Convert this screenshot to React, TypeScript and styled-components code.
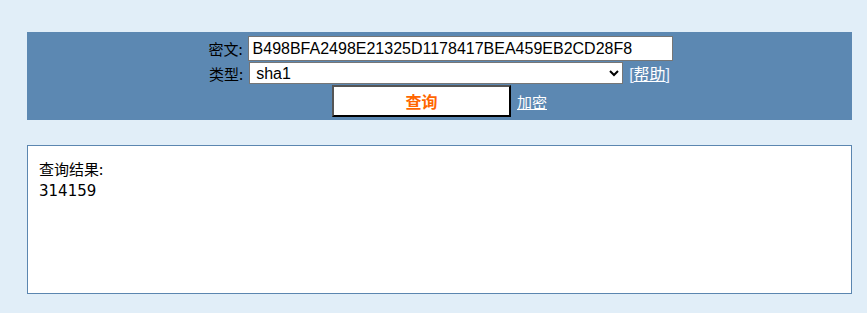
import React from "react";
import styled, { createGlobalStyle } from "styled-components";

const GlobalStyle = createGlobalStyle`
  html, body {
    margin: 0;
    padding: 0;
    background: #e1eef8;
  }
  body {
    font-family: "Liberation Sans", Arial, "Noto Sans CJK SC", sans-serif;
  }
`;

const Page = styled.div`
  width: 825px;
  padding: 32px 0 20px 27px;
`;

const QueryPanel = styled.form`
  background: #5c88b2;
  padding: 4px 0 3px;
  display: flex;
  flex-direction: column;
  align-items: center;
  gap: 1px;
`;

const Row = styled.div<{ $h: number; $shift?: number }>`
  display: flex;
  align-items: center;
  height: ${(p) => p.$h}px;
  margin-left: ${(p) => p.$shift ?? 0}px;
`;

const Label = styled.label`
  font-size: 15px;
  color: #000;
  margin-right: 5px;
  font-family: "Noto Sans CJK SC", sans-serif;
`;

const TextInput = styled.input`
  box-sizing: border-box;
  width: 425px;
  height: 25px;
  border: 1px solid #767676;
  padding: 1px 4px;
  font-size: 16px;
  font-family: "Liberation Sans", Arial, sans-serif;
  color: #000;
  background: #fff;
  outline: none;
`;

const Select = styled.select`
  box-sizing: border-box;
  width: 374px;
  height: 22px;
  border: 1px solid #767676;
  font-size: 16px;
  font-family: "Liberation Sans", Arial, sans-serif;
  background: #fff;
  color: #000;
  padding: 0 2px;
  margin-left: 1px;
`;

const Link = styled.a`
  color: #fff;
  font-size: 15px;
  font-family: "Noto Sans CJK SC", sans-serif;
  text-decoration: underline;
  margin-left: 6px;
`;

const Bracket = styled.span`
  color: #e8f0ff;
  font-size: 16px;
  margin-left: 6px;
  font-family: "Liberation Sans", Arial, "Noto Sans CJK SC", sans-serif;
  a {
    color: #fff;
    text-decoration: underline;
    font-family: "Noto Sans CJK SC", sans-serif;
    font-size: 16px;
  }
`;

const SubmitButton = styled.button`
  box-sizing: border-box;
  width: 179px;
  height: 32px;
  background: #fff;
  border: 2px solid;
  border-color: #555 #000 #000 #555;
  color: #ff6600;
  font-size: 16px;
  font-weight: bold;
  font-family: "Noto Sans CJK SC", sans-serif;
  padding: 0;
  cursor: pointer;
`;

const ResultBox = styled.div`
  box-sizing: border-box;
  margin-top: 25px;
  height: 149px;
  background: #fff;
  border: 1px solid #5b86b0;
  padding: 11px 11px;
  font-size: 15px;
  line-height: 23px;
  color: #000;
`;

const ResultLine = styled.div<{ $cjk?: boolean }>`
  font-family: ${(p) =>
    p.$cjk ? `"Noto Sans CJK SC", sans-serif` : `"DejaVu Sans", Verdana, sans-serif`};
`;

export default function App() {
  return (
    <>
      <GlobalStyle />
      <Page>
        <QueryPanel onSubmit={(e) => e.preventDefault()}>
          <Row $h={25} $shift={2}>
            <Label>密文:</Label>
            <TextInput defaultValue="B498BFA2498E21325D1178417BEA459EB2CD28F8" />
          </Row>
          <Row $h={22}>
            <Label>类型:</Label>
            <Select defaultValue="sha1">
              <option value="md5">md5</option>
              <option value="sha1">sha1</option>
              <option value="sha256">sha256</option>
            </Select>
            <Bracket>
              [<a href="#">帮助</a>]
            </Bracket>
          </Row>
          <Row $h={32}>
            <SubmitButton type="submit">查询</SubmitButton>
            <Link href="#">加密</Link>
          </Row>
        </QueryPanel>
        <ResultBox>
          <ResultLine $cjk>查询结果:</ResultLine>
          <ResultLine>314159</ResultLine>
        </ResultBox>
      </Page>
    </>
  );
}
